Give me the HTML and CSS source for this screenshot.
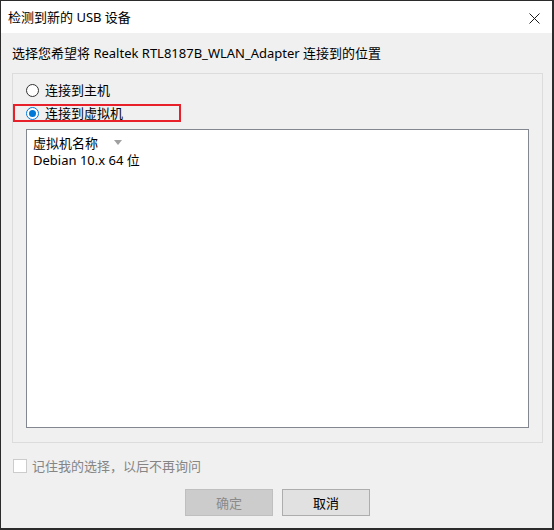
FILE: index.html
```html
<!DOCTYPE html>
<html lang="zh-CN">
<head>
<meta charset="utf-8">
<link rel="stylesheet" href="styles.css">
</head>
<body>
<div class="window">
  <div class="titlebar">
    <span class="title">检测到新的 USB 设备</span>
    <span class="close">
      <svg width="11" height="11" viewBox="0 0 11 11"><path d="M0.5 0.5 L10.5 10.5 M10.5 0.5 L0.5 10.5" stroke="#1a1a1a" stroke-width="1" fill="none"/></svg>
    </span>
  </div>
  <div class="content">
    <div class="prompt">选择您希望将 Realtek RTL8187B_WLAN_Adapter 连接到的位置</div>
    <div class="group">
      <div class="radio-row">
        <span class="radio"></span>
        <span>连接到主机</span>
      </div>
      <div class="radio-row">
        <span class="radio checked"></span>
        <span>连接到虚拟机</span>
      </div>
      <div class="highlight"></div>
      <div class="list">
        <div class="list-head">
          <span>虚拟机名称</span>
          <span class="sort-arrow"></span>
        </div>
        <div class="list-item">Debian 10.x 64 位</div>
      </div>
    </div>
    <div class="remember">
      <span class="checkbox"></span>
      <span>记住我的选择，以后不再询问</span>
    </div>
    <div class="buttons">
      <button class="btn disabled">确定</button>
      <button class="btn">取消</button>
    </div>
  </div>
</div>
</body>
</html>
```

FILE: styles.css
```css
* { box-sizing: border-box; }
html, body {
  margin: 0;
  padding: 0;
  background: #f0f0f0;
}
body {
  font-family: "Noto Sans", "Noto Sans CJK SC", sans-serif;
  font-size: 13px;
  color: #000;
}
.window {
  width: 554px;
  height: 530px;
  border: 1px solid #2b2b2b;
  border-right: 2px solid #2b2b2b;
  border-bottom: 2px solid #2b2b2b;
  display: flex;
  flex-direction: column;
  background: #f0f0f0;
  overflow: hidden;
}
.titlebar {
  height: 32px;
  background: #fff;
  display: flex;
  align-items: center;
  justify-content: space-between;
  padding-left: 7px;
  flex: none;
}
.title {
  font-size: 13px;
  color: #000;
  line-height: 16px;
}
.close {
  display: flex;
  margin-right: 12px;
  margin-top: 2px;
}
.content {
  padding: 0 9px 0 11px;
  display: flex;
  flex-direction: column;
  flex: 1;
}
.prompt {
  margin-top: 12px;
  line-height: 16px;
  height: 16px;
}
.group {
  position: relative;
  margin-top: 12px;
  height: 370px;
  border: 1px solid #dcdcdc;
  padding: 8px 13px 14px 13px;
  display: flex;
  flex-direction: column;
}
.radio-row {
  display: flex;
  align-items: center;
  height: 17px;
  gap: 5px;
  margin-bottom: 6px;
  line-height: 17px;
}
.radio {
  width: 13px;
  height: 13px;
  border: 1px solid #333;
  border-radius: 50%;
  background: #fff;
  margin-right: 1px;
  display: flex;
  align-items: center;
  justify-content: center;
}
.radio.checked {
  border-color: #0078d7;
}
.radio.checked::after {
  content: "";
  width: 7px;
  height: 7px;
  border-radius: 50%;
  background: #0078d7;
}
.highlight {
  position: absolute;
  left: 0;
  top: 30px;
  width: 168px;
  height: 18px;
  border: 2px solid #e8202a;
}
.list {
  margin-top: 1px;
  flex: 1;
  background: #fff;
  border: 1px solid #828790;
  padding: 3px 6px;
}
.list-head {
  display: flex;
  align-items: center;
  height: 18px;
  gap: 16px;
}
.sort-arrow {
  width: 0;
  height: 0;
  border-left: 4px solid transparent;
  border-right: 4px solid transparent;
  border-top: 5px solid #a0a0a0;
  margin-top: 1px;
}
.list-item {
  margin-top: 1px;
  height: 17px;
  line-height: 17px;
}
.remember {
  margin-top: 15px;
  display: flex;
  align-items: center;
  gap: 5px;
  color: #858585;
  height: 15px;
}
.checkbox {
  width: 14px;
  height: 14px;
  border: 1px solid #cccccc;
  background: #fff;
  margin-left: 1px;
}
.buttons {
  margin-top: 16px;
  display: flex;
  justify-content: center;
  gap: 9px;
}
.btn {
  width: 88px;
  height: 27px;
  font-family: inherit;
  font-size: 13px;
  background: #e1e1e1;
  border: 1px solid #adadad;
  color: #000;
  padding: 0;
  margin: 0;
}
.btn.disabled {
  background: #cccccc;
  border-color: #bfbfbf;
  color: #8a8a8a;
}
```
